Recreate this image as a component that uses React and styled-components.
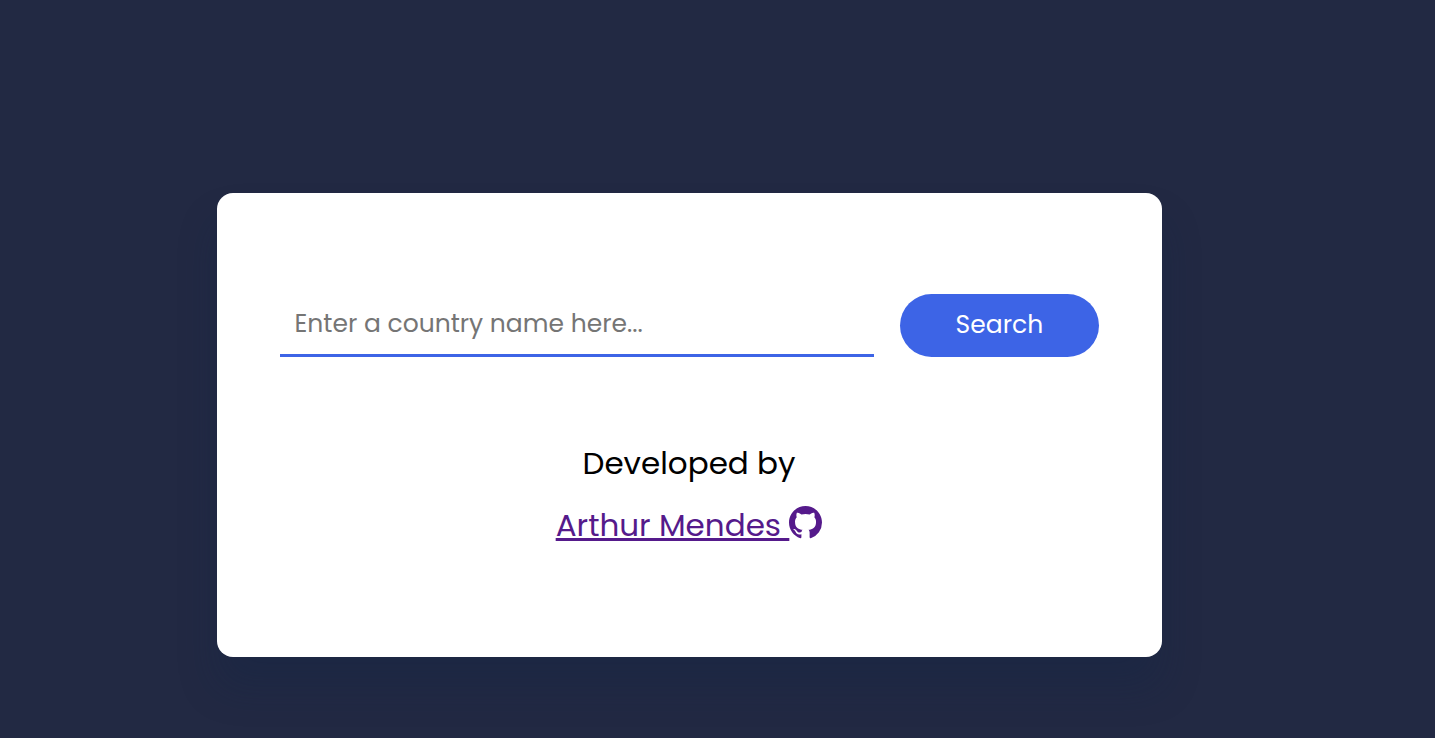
import React from "react";
import styled, { createGlobalStyle } from "styled-components";
import { BsGithub } from "react-icons/bs";

const GlobalStyle = createGlobalStyle`
  * {
    box-sizing: border-box;
    margin: 0;
    padding: 0;
  }
  body {
    background-color: #222943;
    font-family: Poppins, Inter, sans-serif;
  }
`;

const Page = styled.main`
  display: flex;
  justify-content: center;
  padding: 193px 57px 80px 0;
`;

const Card = styled.section`
  width: 90%;
  max-width: 945px;
  padding: 101px 63px;
  background-color: #ffffff;
  border-radius: 16px;
  box-shadow: 0 30px 38px rgba(18, 35, 68, 0.3);
`;

const SearchForm = styled.form`
  display: grid;
  grid-template-columns: 3fr 1fr;
  gap: 26px;
`;

const SearchInput = styled.input`
  min-width: 0;
  height: 63px;
  padding: 0 15px;
  border: none;
  border-bottom: 3px solid #3d64e6;
  outline: none;
  background: transparent;
  color: #000000;
  font-family: inherit;
  font-size: 25px;
  &::placeholder {
    color: #757575;
  }
`;

const SearchButton = styled.button`
  height: 63px;
  padding-bottom: 2px;
  border: none;
  border-radius: 32px;
  background-color: #3d64e6;
  color: #ffffff;
  font-family: inherit;
  font-size: 25px;
  cursor: pointer;
`;

const Credits = styled.footer`
  margin-top: 75px;
  text-align: center;
  font-size: 31px;
  font-weight: 400;
  line-height: 62px;
`;

const AuthorLink = styled.a`
  color: #551a8b;
  text-decoration-thickness: 3px;
  text-underline-offset: 2px;
`;

const GithubIcon = styled(BsGithub)`
  width: 33px;
  height: 33px;
  vertical-align: -3px;
`;

export default function App() {
  return (
    <>
      <GlobalStyle />
      <Page>
        <Card>
          <SearchForm onSubmit={(event) => event.preventDefault()}>
            <SearchInput
              type="text"
              aria-label="Country name"
              placeholder="Enter a country name here..."
            />
            <SearchButton type="submit">Search</SearchButton>
          </SearchForm>
          <Credits>
            <p>Developed by</p>
            <p>
              <AuthorLink href="#github">
                Arthur Mendes <GithubIcon aria-hidden="true" />
              </AuthorLink>
            </p>
          </Credits>
        </Card>
      </Page>
    </>
  );
}
